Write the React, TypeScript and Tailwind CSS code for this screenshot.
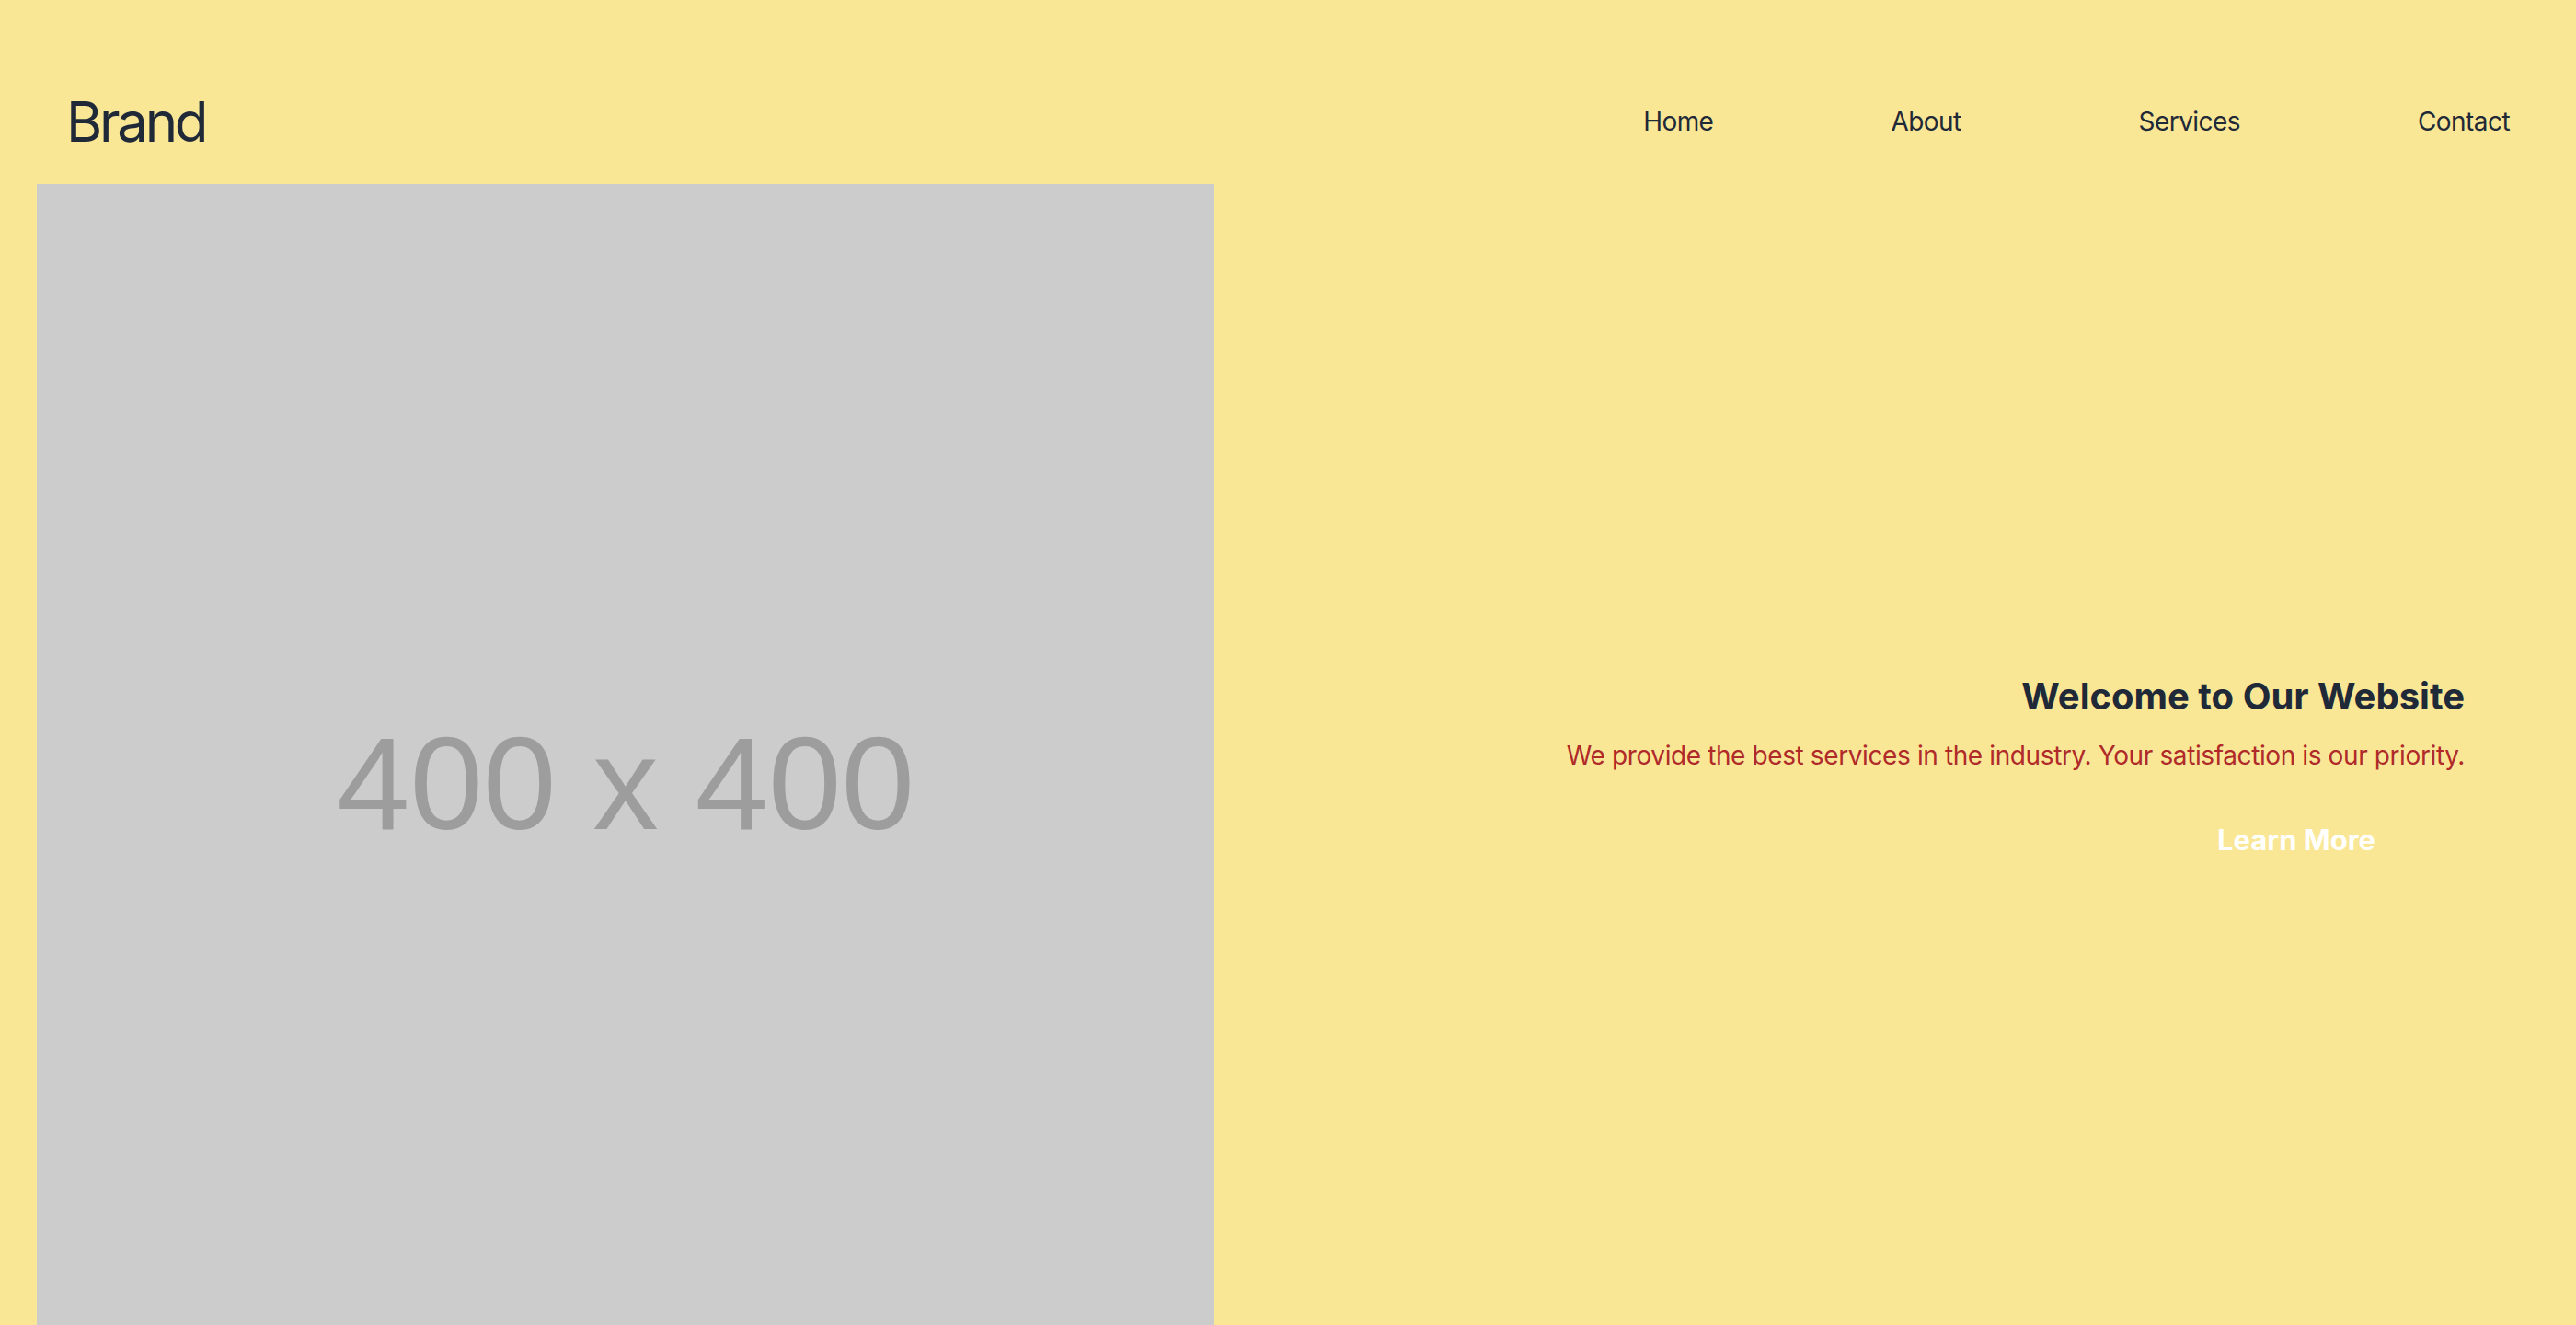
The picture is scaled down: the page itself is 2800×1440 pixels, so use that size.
const App = () => {
    const links = ["Home", "About", "Services", "Contact"]

    return(
        <div className="min-h-screen bg-[#f9e795] font-['Inter',sans-serif] text-[#1f2937]">
            <header className="flex items-center justify-between px-[72px] pt-[102px] pb-[38px]">
                <a href="#" className="text-[60px] leading-[60px] tracking-[-0.055em]">Brand</a>
                <nav className="flex gap-[193px] text-[28px] leading-[42px] tracking-[-0.02em]">
                    {links.map((link) => (
                        <a key={link} href="#">{link}</a>
                    ))}
                </nav>
            </header>
            <main className="flex pl-[40px]">
                <div className="flex h-[1280px] w-[1280px] shrink-0 items-center justify-center bg-[#cccccc]">
                    <span className="pt-[24px] font-['Liberation_Sans',Arial,sans-serif] text-[143px] text-[#9d9d9d] blur-[0.7px]">
                        400 x 400
                    </span>
                </div>
                <section className="flex flex-1 flex-col items-end justify-center pr-[121px] text-right">
                    <h1 className="text-[40px] leading-[48px] font-bold">Welcome to Our Website</h1>
                    <p className="mt-[19px] text-[28px] leading-[42px] tracking-[-0.014em] text-[#b02a2a]">
                        We provide the best services in the industry. Your satisfaction is our priority.
                    </p>
                    <button className="mt-[36px] px-[97px] py-[13px] text-[31px] leading-[44px] font-bold text-white">
                        Learn More
                    </button>
                </section>
            </main>
        </div>
    )
}

export default App
